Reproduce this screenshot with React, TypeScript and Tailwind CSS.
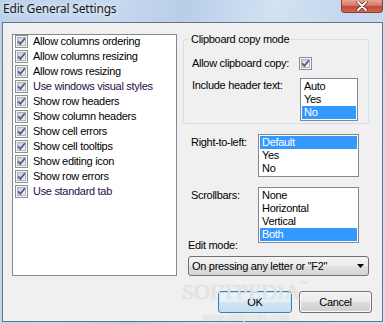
import React from "react";

function Check() {
  return (
    <svg width="13" height="13" viewBox="0 0 13 13" className="shrink-0">
      <defs>
        <linearGradient id="cbg" x1="0" y1="0" x2="1" y2="1">
          <stop offset="0" stopColor="#c9ced6" />
          <stop offset="1" stopColor="#f4f5f6" />
        </linearGradient>
      </defs>
      <rect x="0.5" y="0.5" width="12" height="12" fill="#f6f6f6" stroke="#8e8f8f" />
      <rect x="2.5" y="2.5" width="8" height="8" fill="url(#cbg)" stroke="#b0b4ba" />
      <path d="M3.2 6.4 L5.4 8.9 L9.9 3.3" fill="none" stroke="#4a5c92" strokeWidth="1.7" />
    </svg>
  );
}

function ListBox({
  items,
  selected,
  className,
}: {
  items: string[];
  selected: number;
  className: string;
}) {
  return (
    <div className={"border border-[#828790] bg-white p-[1px] " + className}>
      {items.map((it, i) => (
        <div
          key={it}
          className={
            "h-[13px] pl-[2px] leading-[13px] " +
            (i === selected ? "bg-[#3399ff] text-white" : "text-black")
          }
        >
          {it}
        </div>
      ))}
    </div>
  );
}

const leftItems: [string, boolean][] = [
  ["Allow columns ordering", false],
  ["Allow columns resizing", false],
  ["Allow rows resizing", false],
  ["Use windows visual styles", true],
  ["Show row headers", false],
  ["Show column headers", false],
  ["Show cell errors", false],
  ["Show cell tooltips", false],
  ["Show editing icon", false],
  ["Show row errors", false],
  ["Use standard tab", true],
];

export default function App() {
  return (
    <div className="relative w-[385px] h-[324px] overflow-hidden bg-[linear-gradient(100deg,#bcd1ea_0%,#c7d9ee_25%,#b8cee8_42%,#d2e2f3_62%,#c3d7ed_80%,#d0e0f1_100%)] font-['Liberation_Sans',Arial,sans-serif] text-[11px] leading-[13px] tracking-[-0.3px] text-black">
      {/* Title bar */}
      <div className="flex h-[22px] items-start">
        <div className="pl-[3px] pt-[1px] font-['Noto_Sans',sans-serif] text-[12px] leading-[16px] tracking-[-0.2px] text-[#1a1a1a] [text-shadow:0_0_6px_#ffffff]">
          Edit General Settings
        </div>
        <div className="ml-auto mr-[2px] flex h-[13px] w-[42px] items-center justify-center rounded-b-[4px] border border-t-0 border-[#8a3b30] bg-[linear-gradient(#e8a294_0%,#d77a68_45%,#c24a35_55%,#d06a4f_100%)]">
          <svg width="12" height="10" viewBox="0 0 12 10">
            <path d="M2 1 L10 9 M10 1 L2 9" stroke="#5a2a22" strokeWidth="3.2" strokeLinecap="round" />
            <path d="M2 1 L10 9 M10 1 L2 9" stroke="#ffffff" strokeWidth="1.8" strokeLinecap="round" />
          </svg>
        </div>
      </div>

      {/* Client area */}
      <div className="ml-[2px] h-[300px] w-[381px] border border-[#6b7480] bg-[#f0f0f0]">
        <div className="flex pl-[9px] pt-[11px]">
          {/* Left checked list */}
          <div className="flex h-[242px] w-[165px] flex-col gap-[2px] border border-[#828790] bg-white pl-[2px]">
            {leftItems.map(([t, purple]) => (
              <div key={t} className="flex h-[13px] items-center gap-[5px]">
                <Check />
                <span className={purple ? "text-[#2a0c45]" : "text-black"}>{t}</span>
              </div>
            ))}
          </div>

          {/* Right column */}
          <div className="ml-[6px] mt-[-1px] flex w-[189px] flex-col">
            <fieldset className="h-[91px] w-[186px] rounded-[3px] border border-[#d5dfe5] pl-[8px]">
              <legend className="ml-[-2px] px-[1px] leading-[13px]">Clipboard copy mode</legend>
              <div className="mt-[11px] flex h-[13px] items-center">
                <span className="w-[107px]">Allow clipboard copy:</span>
                <Check />
              </div>
              <div className="mt-[8px] flex items-start">
                <span className="w-[108px] pt-[1px]">Include header text:</span>
                <ListBox items={["Auto", "Yes", "No"]} selected={2} className="w-[58px]" />
              </div>
            </fieldset>

            <div className="mt-[10px] flex items-start">
              <span className="ml-[8px] w-[67px] pt-[2px]">Right-to-left:</span>
              <ListBox items={["Default", "Yes", "No"]} selected={0} className="w-[101px]" />
            </div>

            <div className="mt-[10px] flex items-start">
              <span className="ml-[8px] w-[67px] pt-[2px]">Scrollbars:</span>
              <ListBox
                items={["None", "Horizontal", "Vertical", "Both"]}
                selected={3}
                className="w-[101px]"
              />
            </div>

            <div className="ml-[5px] mt-[-4px] h-[13px]">Edit mode:</div>

            <div className="ml-[5px] mt-[4px] flex h-[20px] w-[181px] items-center rounded-[3px] border border-[#707070] bg-[linear-gradient(#f3f3f3_0%,#ececec_50%,#e0e0e0_50%,#d6d6d6_100%)] pl-[3px] pr-[4px]">
              <span className="flex-1">On pressing any letter or "F2"</span>
              <svg width="7" height="4" viewBox="0 0 7 4">
                <path d="M0 0 H7 L3.5 4 Z" fill="#000" />
              </svg>
            </div>

            <div className="ml-[35px] mt-[15px] flex">
              <button className="flex h-[22px] w-[74px] items-center justify-center rounded-[3px] border border-[#3c7fb1] bg-[linear-gradient(#edf5fb_0%,#e3eff7_50%,#d3e5f2_50%,#c6dcee_100%)] shadow-[inset_0_0_0_1px_#c3e4f8] text-black">
                OK
              </button>
              <button className="ml-[7px] flex h-[22px] w-[73px] items-center justify-center rounded-[3px] border border-[#707070] bg-[linear-gradient(#f2f2f2_0%,#ebebeb_50%,#dddddd_50%,#cfcfcf_100%)] shadow-[inset_0_0_0_1px_#fbfbfb] text-black">
                Cancel
              </button>
            </div>
          </div>
        </div>
      </div>

      {/* Watermark overlay */}
      <div className="pointer-events-none absolute left-[182px] top-[281px] font-['Liberation_Serif',serif] text-[22px] leading-[22px] tracking-[0px] text-white/60 [text-shadow:0_0_1px_#b8b8b8]">
        SOFTPEDIA<span className="align-top text-[7px] leading-[7px]">™</span>
      </div>
      <div className="pointer-events-none absolute left-[203px] top-[312px] text-[10px] leading-[12px] tracking-[0px] text-[#f6f6f6] [text-shadow:0_0_1px_#b0b0b0]">
        www.softpedia.com
      </div>
    </div>
  );
}
